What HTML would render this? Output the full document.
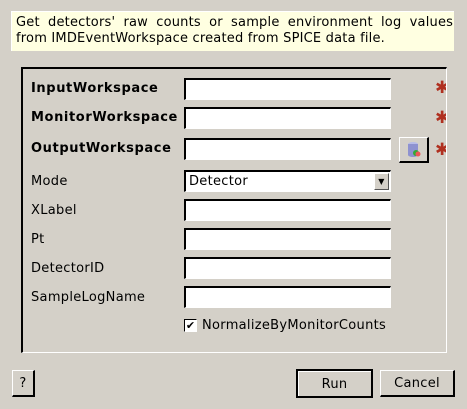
<!DOCTYPE html><html><head><style>
body{margin:0;width:467px;height:409px;background:#d4d0c8;font-family:"DejaVu Sans",sans-serif;font-size:13px;letter-spacing:0.3px;color:#000;position:relative;overflow:hidden}
.a{position:absolute}
.desc{left:11px;top:11px;width:443px;height:40px;background:#ffffe1;border-left:1px solid #fff;border-top:1px solid #fff;box-sizing:border-box;padding:3px 4px 0 4px;line-height:16px;font-size:13px;letter-spacing:0.2px;overflow:hidden}
.j{white-space:nowrap;display:block;word-spacing:3.9px}
.frame{left:21px;top:67px;width:426px;height:286px;border-top:2px solid #000;border-left:2px solid #000;border-right:1px solid #fff;border-bottom:1px solid #fff;box-sizing:border-box;overflow:hidden}
.lbl{left:31px}
.b{font-weight:bold;letter-spacing:0.6px}
.in{left:184px;width:207px;height:22px;background:#fff;border-top:2px solid #000;border-left:2px solid #000;border-right:1px solid #fff;border-bottom:1px solid #fff;box-sizing:border-box}
.clip{left:430px;top:60px;width:16px;height:120px;overflow:hidden}
.star{color:#b03020;font-weight:bold;font-size:17px;left:5px}
.btn{background:#d4d0c8;border-top:1px solid #fff;border-left:1px solid #fff;border-right:2px solid #000;border-bottom:2px solid #000;box-sizing:border-box;text-align:center}
</style></head><body>
<div class="a desc"><span class="j">Get detectors' raw counts or sample environment log values</span>from IMDEventWorkspace created from SPICE data file.</div>
<div class="a frame"></div>
<div class="a lbl b" style="top:81px">InputWorkspace</div>
<div class="a lbl b" style="top:110px">MonitorWorkspace</div>
<div class="a lbl b" style="top:141px">OutputWorkspace</div>
<div class="a lbl" style="top:174px">Mode</div>
<div class="a lbl" style="top:203px">XLabel</div>
<div class="a lbl" style="top:232px">Pt</div>
<div class="a lbl" style="top:261px">DetectorID</div>
<div class="a lbl" style="top:290px">SampleLogName</div>
<div class="a in" style="top:78px"></div>
<div class="a in" style="top:107px"></div>
<div class="a in" style="top:138px"></div>
<div class="a in" style="top:170px;padding:2px 0 0 3px">Detector<div class="a btn" style="right:1px;top:1px;width:15px;height:17px;border-right-width:1px;border-bottom-width:1px;border-color:#fff #555 #555 #fff;font-size:8px;line-height:15px">▼</div></div>
<div class="a in" style="top:199px"></div>
<div class="a in" style="top:228px"></div>
<div class="a in" style="top:257px"></div>
<div class="a in" style="top:286px"></div>
<div class="a btn" style="left:399px;top:137px;width:30px;height:26px"><svg width="26" height="22" viewBox="0 0 26 22"><ellipse cx="12" cy="6" rx="5" ry="2" fill="#b8bce8"/><rect x="7" y="6" width="10" height="11" fill="#8e92d0"/><ellipse cx="12" cy="17" rx="5" ry="2" fill="#8e92d0"/><circle cx="15" cy="15" r="3" fill="#3a3"/><circle cx="17" cy="16" r="2.5" fill="#e55"/></svg></div>
<div class="a clip"><div class="a star" style="top:18px">✱</div><div class="a star" style="top:48px">✱</div><div class="a star" style="top:80px">✱</div></div>
<div class="a" style="left:184px;top:319px;width:11px;height:11px;background:#fff;border-top:1px solid #000;border-left:1px solid #000;border-right:1px solid #fff;border-bottom:1px solid #fff;font-size:11px;line-height:11px;text-align:center;letter-spacing:0">✔</div>
<div class="a" style="left:202px;top:318px">NormalizeByMonitorCounts</div>
<div class="a btn" style="left:12px;top:370px;width:23px;height:27px;line-height:25px">?</div>
<div class="a btn" style="left:296px;top:369px;width:77px;height:29px;line-height:27px;border:2px solid #000;box-shadow:inset 1px 1px #fff">Run</div>
<div class="a btn" style="left:380px;top:370px;width:75px;height:27px;line-height:25px">Cancel</div>
</body></html>
